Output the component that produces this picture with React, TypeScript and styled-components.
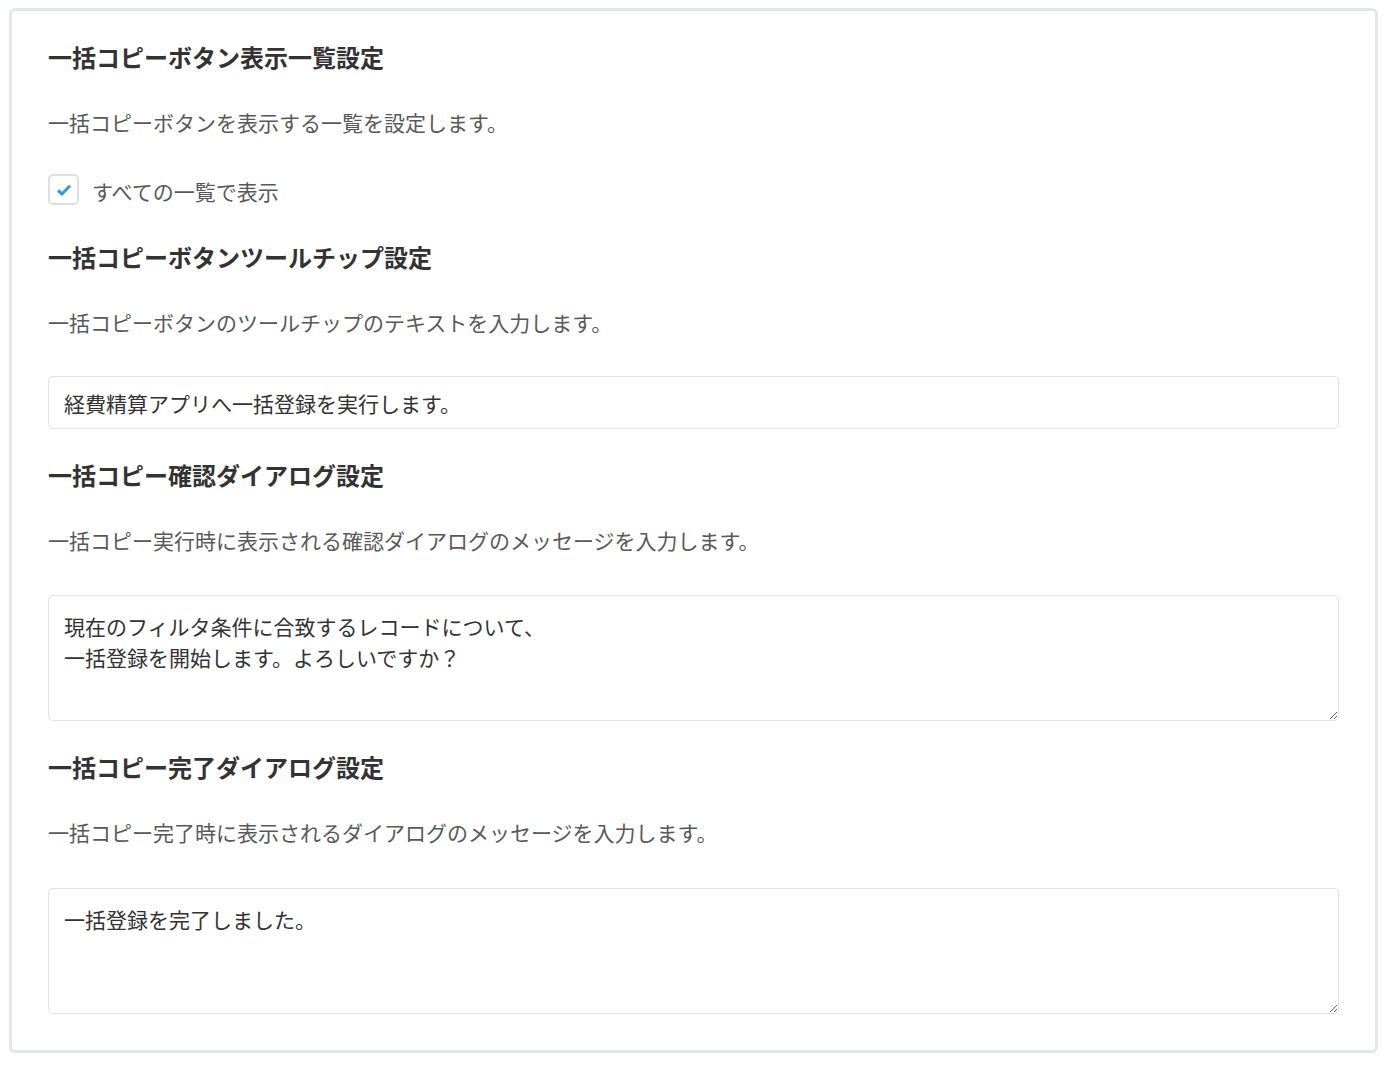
import styled, { createGlobalStyle } from "styled-components";

const GlobalStyle = createGlobalStyle`
  body {
    margin: 0;
    background: #fff;
    font-family: "Noto Sans CJK JP", "Noto Sans", sans-serif;
    color: #333;
  }
`;

const App: React.FC = () => {
  return (
    <Page>
      <GlobalStyle />
      <Panel>
        <Heading>一括コピーボタン表示一覧設定</Heading>
        <Description>一括コピーボタンを表示する一覧を設定します。</Description>
        <CheckRow>
          <CheckBox>
            <svg width="18" height="18" viewBox="0 0 18 18">
              <path d="M3 9.5 L7 13 L15 4.8" fill="none" stroke="#3498db" strokeWidth="3" />
            </svg>
          </CheckBox>
          <CheckLabel>すべての一覧で表示</CheckLabel>
        </CheckRow>

        <Heading>一括コピーボタンツールチップ設定</Heading>
        <Description>一括コピーボタンのツールチップのテキストを入力します。</Description>
        <TextInput defaultValue="経費精算アプリへ一括登録を実行します。" />

        <Heading>一括コピー確認ダイアログ設定</Heading>
        <Description>一括コピー実行時に表示される確認ダイアログのメッセージを入力します。</Description>
        <TextArea
          defaultValue={"現在のフィルタ条件に合致するレコードについて、\n一括登録を開始します。よろしいですか？"}
        />

        <Heading>一括コピー完了ダイアログ設定</Heading>
        <Description>一括コピー完了時に表示されるダイアログのメッセージを入力します。</Description>
        <TextArea $last defaultValue="一括登録を完了しました。" />
      </Panel>
    </Page>
  );
};

export default App;

const Page = styled.div`
  padding: 8px 12px 0 9px;
`;

const Panel = styled.div`
  border: 3px solid #e3e7e8;
  border-radius: 6px;
  padding: 28px 36px 36px;
  display: flex;
  flex-direction: column;
`;

const Heading = styled.h3`
  margin: 0 0 31px;
  font-size: 24px;
  line-height: 36px;
  font-weight: 700;
  color: #333;
`;

const Description = styled.p`
  margin: 0 0 36px;
  font-size: 21px;
  line-height: 32px;
  font-weight: 400;
  color: #595959;
`;

const CheckRow = styled.label`
  display: flex;
  align-items: center;
  gap: 13px;
  margin: -2px 0 32px;
  cursor: pointer;
`;

const CheckBox = styled.span`
  width: 27px;
  height: 27px;
  border: 2px solid #dddfe0;
  border-radius: 5px;
  display: flex;
  align-items: center;
  justify-content: center;
  background: #fff;
`;

const CheckLabel = styled.span`
  font-size: 21px;
  line-height: 32px;
  color: #595959;
  padding-top: 3px;
`;

const TextInput = styled.input`
  box-sizing: border-box;
  width: 100%;
  height: 53px;
  margin: 2px 0 28px;
  padding: 0 15px;
  border: 1px solid #e3e3e3;
  border-radius: 5px;
  font-family: inherit;
  font-size: 21px;
  color: #333;
  outline: none;
`;

const TextArea = styled.textarea<{ $last?: boolean }>`
  box-sizing: border-box;
  display: block;
  width: 100%;
  height: 126px;
  margin: ${(p) => (p.$last ? "4px 0 0" : "3px 0 28px")};
  padding: 15px 15px;
  border: 1px solid #e3e3e3;
  border-radius: 5px;
  font-family: inherit;
  font-size: 21px;
  line-height: 31px;
  color: #333;
  outline: none;
  resize: vertical;
`;
